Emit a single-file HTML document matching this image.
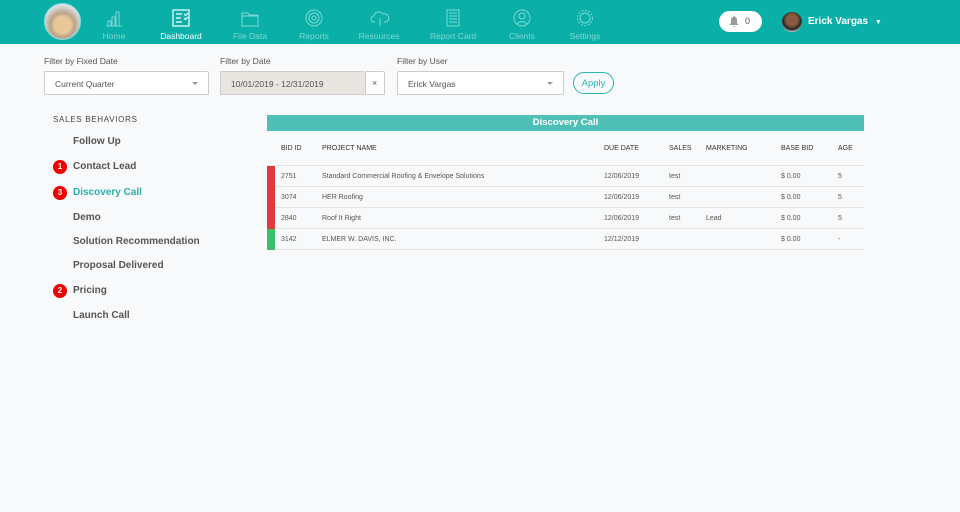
<!DOCTYPE html>
<html><head><meta charset="utf-8"><style>
*{margin:0;padding:0;box-sizing:border-box}
body{width:960px;height:512px;background:#f8f9fa;font-family:"Liberation Sans",sans-serif;position:relative;overflow:hidden;color:#444}
.hdr{position:absolute;left:0;top:0;width:960px;height:44px;background:#0aafa8}
.av{position:absolute;left:44px;top:3px;width:37px;height:37px;border-radius:50%;background:radial-gradient(circle at 50% 60%,#e8c89a 0 30%,#b9a38a 45%,#ddd 70%);border:1px solid #8dd}
.nav{position:absolute;top:0;text-align:center;width:80px;color:#7ed8d3;font-size:8.5px}
.nav svg{position:absolute;left:31px;top:9px}
.nav span{position:absolute;top:31px;left:0;width:80px}
.nav.on{color:#fff}
.bell{position:absolute;left:719px;top:11px;width:43px;height:21px;background:#fff;border-radius:11px;font-size:9px;color:#555}
.uav{position:absolute;left:782px;top:12px;width:20px;height:20px;border-radius:50%;background:radial-gradient(circle at 50% 40%,#8a5a40 0 35%,#222 60%,#eee 80%)}
.uname{position:absolute;left:808px;top:16px;color:#fff;font-weight:bold;font-size:10px}
.lbl{position:absolute;top:56px;font-size:8.5px;color:#555}
.sel{position:absolute;top:71px;height:24px;background:#fff;border:1px solid #ccc;border-radius:2px;font-size:8.5px;color:#555;padding:7px 10px}
.car{position:absolute;right:10px;top:10px;border:3px solid transparent;border-top-color:#999}
.apply{position:absolute;left:573px;top:72px;width:41px;height:22px;border:1px solid #2bb7ae;border-radius:11px;color:#2bb7ae;font-size:9.5px;text-align:center;line-height:21px}
.side{position:absolute;left:73px;font-size:10px;color:#555;font-weight:bold}
.badge{position:absolute;left:53px;width:14px;height:14px;border-radius:50%;background:#e00;color:#fff;font-size:8px;font-weight:bold;text-align:center;line-height:14px}
.tt{position:absolute;left:267px;top:115px;width:597px;height:16px;background:#4ec0b5;color:#fff;font-weight:bold;font-size:9.5px;text-align:center;line-height:16px}
.th{position:absolute;top:145px;font-size:7px;color:#333}
.row{position:absolute;left:267px;width:597px;height:21px;border-bottom:1px solid #e4e4e4;font-size:7px;color:#555}
.row span{position:absolute;top:7px}
.row i{position:absolute;left:0;top:0;width:8px;height:21px}
</style></head><body>
<div class="hdr">
<div class="av"></div>
<div class="nav" style="left:74px"><svg width="18" height="18" viewBox="0 0 18 18" fill="none" stroke="#7ed8d3" stroke-width="1"><path d="M1 17h16M3 17v-5h3v5M7 17V8h3v9M11 17V3h3v14"/></svg><span>Home</span></div>
<div class="nav on" style="left:141px"><svg width="18" height="18" viewBox="0 0 18 18" fill="none" stroke="#fff" stroke-width="1.2"><rect x="1" y="1" width="16" height="16"/><path d="M4 5h6M4 9h5M4 13h6M12 5l1.5 1.5L16 4M12 9l1.5 1.5L16 8"/></svg><span>Dashboard</span></div>
<div class="nav" style="left:210px"><svg width="18" height="18" viewBox="0 0 18 18" fill="none" stroke="#7ed8d3"><path d="M1 4h6l1 2h9v11H1z"/><path d="M1 7h16"/></svg><span>File Data</span></div>
<div class="nav" style="left:274px"><svg width="18" height="18" viewBox="0 0 18 18" fill="none" stroke="#7ed8d3"><circle cx="9" cy="9" r="8"/><circle cx="9" cy="9" r="5"/><circle cx="9" cy="9" r="2"/></svg><span>Reports</span></div>
<div class="nav" style="left:339px"><svg width="20" height="18" viewBox="0 0 20 18" fill="none" stroke="#7ed8d3"><path d="M5 13H4a3 3 0 010-6 5 5 0 019-2 4 4 0 013 8h-2M10 9v8"/></svg><span>Resources</span></div>
<div class="nav" style="left:413px"><svg width="18" height="18" viewBox="0 0 18 18" fill="none" stroke="#7ed8d3"><rect x="3" y="1" width="12" height="16"/><path d="M5 4h8M5 7h8M5 10h8M5 13h8"/></svg><span>Report Card</span></div>
<div class="nav" style="left:482px"><svg width="18" height="18" viewBox="0 0 18 18" fill="none" stroke="#7ed8d3"><circle cx="9" cy="9" r="8"/><circle cx="9" cy="7" r="3"/><path d="M4 15a6 5 0 0110 0"/></svg><span>Clients</span></div>
<div class="nav" style="left:545px"><svg width="18" height="18" viewBox="0 0 18 18" fill="none" stroke="#7ed8d3"><circle cx="9" cy="9" r="7.5" stroke-dasharray="2 1.5"/><circle cx="9" cy="9" r="5"/></svg><span>Settings</span></div>
<div class="bell"><svg style="position:absolute;left:10px;top:5px" width="10" height="11" viewBox="0 0 10 11"><path d="M5 0a1 1 0 011 1 3 3 0 012 3v3l1.5 2h-9L2 7V4a3 3 0 012-3 1 1 0 011-1zM4 10h2a1 1 0 01-2 0z" fill="#999"/></svg><span style="position:absolute;left:26px;top:5px">0</span></div>
<div class="uav"></div>
<div class="uname">Erick Vargas <span style="font-size:7px;margin-left:4px">▼</span></div>
</div>
<div class="lbl" style="left:44px">Filter by Fixed Date</div>
<div class="lbl" style="left:220px">Filter by Date</div>
<div class="lbl" style="left:397px">Filter by User</div>
<div class="sel" style="left:44px;width:165px">Current Quarter<i class="car"></i></div>
<div class="sel" style="left:220px;width:145px;background:#e9e6e1;border-right:none">10/01/2019 - 12/31/2019</div>
<div class="sel" style="left:365px;width:20px;padding:6px 6px;font-size:9px">×</div>
<div class="sel" style="left:397px;width:167px">Erick Vargas<i class="car"></i></div>
<div class="apply">Apply</div>
<div style="position:absolute;left:53px;top:115px;font-size:8px;letter-spacing:.7px;color:#444">SALES BEHAVIORS</div>
<div class="side" style="top:136px">Follow Up</div>
<div class="badge" style="top:160px">1</div><div class="side" style="top:161px">Contact Lead</div>
<div class="badge" style="top:186px">3</div><div class="side" style="top:187px;color:#2bb0aa">Discovery Call</div>
<div class="side" style="top:212px">Demo</div>
<div class="side" style="top:236px">Solution Recommendation</div>
<div class="side" style="top:260px">Proposal Delivered</div>
<div class="badge" style="top:284px">2</div><div class="side" style="top:285px">Pricing</div>
<div class="side" style="top:310px">Launch Call</div>
<div class="tt">Discovery Call</div>
<div style="position:absolute;left:267px;top:131px;width:597px;height:35px;border-bottom:1px solid #e4e4e4"></div>
<div class="th" style="left:281px">BID ID</div><div class="th" style="left:322px">PROJECT NAME</div><div class="th" style="left:604px">DUE DATE</div><div class="th" style="left:669px">SALES</div><div class="th" style="left:706px">MARKETING</div><div class="th" style="left:781px">BASE BID</div><div class="th" style="left:838px">AGE</div>
<div class="row" style="top:166px"><i style="background:#e03a3a"></i><span style="left:14px">2751</span><span style="left:55px">Standard Commercial Roofing &amp; Envelope Solutions</span><span style="left:337px">12/06/2019</span><span style="left:402px">test</span><span style="left:514px">$ 0.00</span><span style="left:571px">5</span></div>
<div class="row" style="top:187px"><i style="background:#e03a3a"></i><span style="left:14px">3074</span><span style="left:55px">HER Roofing</span><span style="left:337px">12/06/2019</span><span style="left:402px">test</span><span style="left:514px">$ 0.00</span><span style="left:571px">5</span></div>
<div class="row" style="top:208px"><i style="background:#e03a3a"></i><span style="left:14px">2840</span><span style="left:55px">Roof It Right</span><span style="left:337px">12/06/2019</span><span style="left:402px">test</span><span style="left:439px">Lead</span><span style="left:514px">$ 0.00</span><span style="left:571px">5</span></div>
<div class="row" style="top:229px"><i style="background:#3cbf6a"></i><span style="left:14px">3142</span><span style="left:55px">ELMER W. DAVIS, INC.</span><span style="left:337px">12/12/2019</span><span style="left:514px">$ 0.00</span><span style="left:571px">-</span></div>
</body></html>
